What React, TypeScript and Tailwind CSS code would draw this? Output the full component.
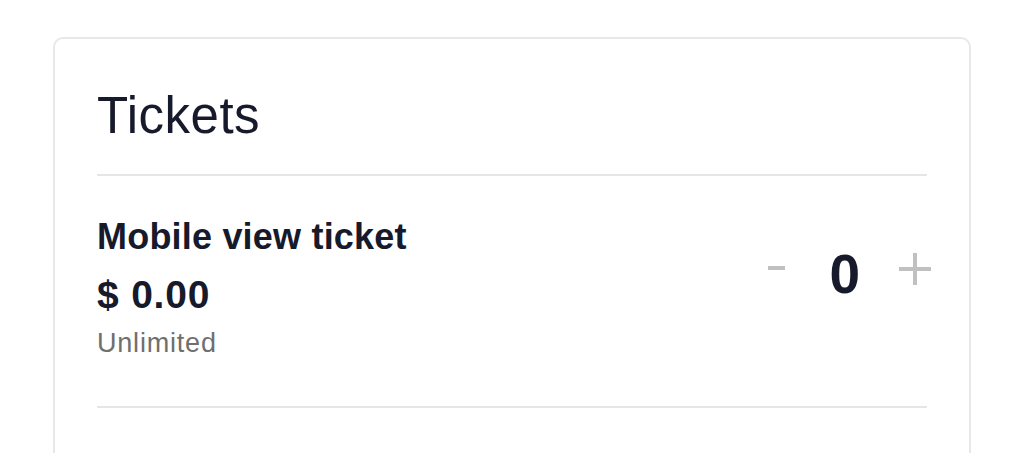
type Ticket = {
  name: string;
  price: string;
  limit: string;
  count: number;
};

const TICKETS: Ticket[] = [{ name: 'Mobile view ticket', price: '$ 0.00', limit: 'Unlimited', count: 0 }];

function TicketRow({ ticket }: { ticket: Ticket }) {
  return (
    <div className="flex items-start justify-between border-b-2 border-[#e6e6e6] pt-[40px] pb-[47px]">
      <div>
        <p className="text-[36px] leading-[42px] font-bold tracking-[0.2px] text-[#161a2b]">{ticket.name}</p>
        <p className="mt-[16px] text-[39px] leading-[42px] font-bold tracking-[0.8px] text-[#161a2b]">{ticket.price}</p>
        <p className="mt-[11px] text-[27px] leading-[32px] tracking-[0.8px] text-[#6f6f6f]">{ticket.limit}</p>
      </div>
      <div className="-mr-[4px] mt-[28px] flex items-start">
        <button type="button" className="mt-[22px] h-[4px] w-[17px] bg-[#c0c0c0]" aria-label="Decrease" />
        <span className="ml-[44px] text-[55px] leading-[60px] font-bold text-[#161a2b]">{ticket.count}</span>
        <button type="button" className="mt-[9px] ml-[39px] text-[#c0c0c0]" aria-label="Increase">
          <svg width="32" height="32" viewBox="0 0 32 32" fill="none" stroke="currentColor" strokeWidth="4">
            <path d="M16 0v32M0 16h32" />
          </svg>
        </button>
      </div>
    </div>
  );
}

export default function App() {
  return (
    <div className="min-h-screen bg-white px-[53px] pt-[37px] font-['Liberation_Sans',Arial,sans-serif]">
      <section className="h-[600px] rounded-[10px] border-2 border-[#e8e8e8] px-[42px]">
        <h1 className="border-b-2 border-[#e6e6e6] pt-[47px] pb-[28px] text-[51px] leading-[60px] font-normal tracking-[0.5px] text-[#161a2b]">
          Tickets
        </h1>
        {TICKETS.map(ticket => (
          <TicketRow key={ticket.name} ticket={ticket} />
        ))}
      </section>
    </div>
  );
}
